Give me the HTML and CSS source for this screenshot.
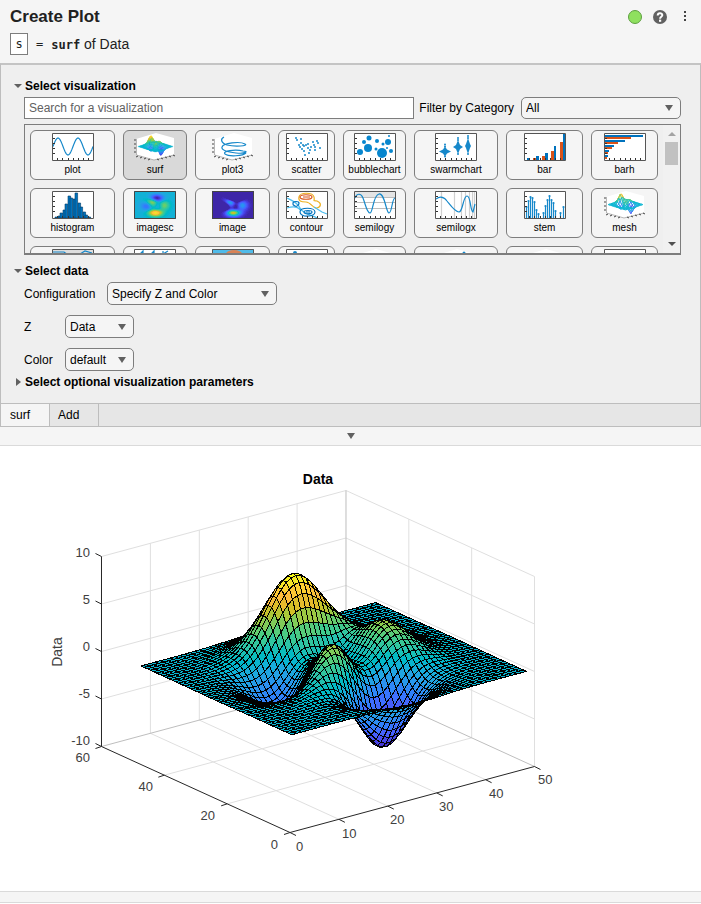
FILE: index.html
```html
<!DOCTYPE html>
<html lang="en">
<head>
<meta charset="utf-8">
<title>Create Plot</title>
<link rel="stylesheet" href="styles.css">
</head>
<body>
<main class="task">
  <header class="task-header">
    <div class="title-row">
      <h1>Create Plot</h1>
      <div class="tools">
        <span class="status" role="img" aria-label="Ready"></span>
        <button class="tool" type="button" aria-label="Help">
          <svg width="14" height="14" viewBox="0 0 14 14"><circle cx="7" cy="7" r="7" fill="#616161"/><path d="M4.7 5.5C4.7 2.4 9.4 2.5 9.3 5.3C9.2 6.8 7.1 6.8 7.1 8.7" fill="none" stroke="#fff" stroke-width="2"/><path d="M6 9.6h2.2v2.2H6z" fill="#fff"/></svg>
        </button>
        <button class="tool" type="button" aria-label="More options">
          <svg width="14" height="14" viewBox="0 0 14 14"><path d="M6 1h2v2H6zM6 5h2v2H6zM6 9h2v2H6z" fill="#444"/></svg>
        </button>
      </div>
    </div>
    <div class="summary-row">
      <input class="out-name" value="s" aria-label="Output variable">
      <code class="equals">=</code>
      <span><code class="fn">surf</code> of Data</span>
    </div>
  </header>

  <section class="panel">
    <details open>
      <summary>Select visualization</summary>
      <div class="section-body">
        <div class="filter-row">
          <input class="search" type="search" placeholder="Search for a visualization" aria-label="Search for a visualization">
          <label for="category">Filter by Category</label>
          <span class="select wide"><select id="category"><option>All</option></select></span>
        </div>
        <div class="gallery">
          <div class="cards" id="cards"></div>
          <div class="scroll" aria-hidden="true"><i class="up"></i><i class="thumb"></i><i class="down"></i></div>
        </div>
      </div>
    </details>
    <details open>
      <summary>Select data</summary>
      <div class="section-body fields">
        <div class="field config"><label for="config">Configuration</label><span class="select"><select id="config"><option>Specify Z and Color</option></select></span></div>
        <div class="field"><label for="zdata">Z</label><span class="select"><select id="zdata"><option>Data</option></select></span></div>
        <div class="field"><label for="color">Color</label><span class="select"><select id="color"><option>default</option></select></span></div>
      </div>
    </details>
    <details>
      <summary>Select optional visualization parameters</summary>
    </details>
  </section>

  <nav class="tabs">
    <button class="tab active" type="button">surf</button>
    <button class="tab" type="button">Add</button>
  </nav>
  <button class="collapse" type="button" aria-label="Collapse controls"><i></i></button>

  <figure class="output">
    <svg id="chart" viewBox="0 0 701 445" role="img" aria-label="Surface plot of Data"></svg>
  </figure>
  <footer class="task-footer"></footer>
</main>
<script src="script.js"></script>
</body>
</html>
```
FILE: styles.css
```css
*, *::before, *::after { box-sizing: border-box; }
body {
  margin: 0;
  background: #fff;
  color: #000;
  font: 12px/16px "Liberation Sans", Arial, sans-serif;
}
button, input, select { font: inherit; color: inherit; margin: 0; }
button { border: 0; background: none; padding: 0; }
i { display: block; }

.task-header {
  background: #f5f5f5;
  color: #212121;
  padding: 6px 9px 8px 10px;
}
.title-row, .tools, .summary-row { display: flex; align-items: center; }
.title-row { justify-content: space-between; height: 22px; }
h1 { margin: 0; font-size: 17px; line-height: 24px; }
.tools { gap: 11px; }
.status {
  width: 14px;
  height: 14px;
  border: 1px solid #5d9f40;
  border-radius: 50%;
  background: #8fe05f;
}
.tool, .tool svg { display: block; height: 14px; }
.summary-row { height: 22px; margin-top: 5px; font-size: 14px; line-height: 22px; }
.out-name {
  width: 18px;
  height: 22px;
  padding: 0;
  border: 1px solid #7d7d7d;
  background: #fff;
  text-align: center;
}
.out-name, code { font-family: "DejaVu Sans Mono", monospace; font-size: 12px; }
.equals { margin: 0 8px; }
.fn { font-weight: bold; }

.panel {
  border: 1px solid #bdbdbd;
  border-bottom: 0;
  border-top: 2px solid #c4c4c4;
  background: #efefef;
  padding: 13px 19px 13px 14px;
}
summary {
  display: flex;
  align-items: center;
  gap: 2px;
  margin-left: -1px;
  font-weight: bold;
  list-style: none;
}
summary::before {
  content: "";
  width: 5px;
  height: 8px;
  margin: 0 2px;
  border: 4px solid transparent;
  border-left: 5px solid #616161;
  border-right: 0;
}
details[open] > summary::before {
  width: 8px;
  height: 4px;
  margin: 0 1px 0 0;
  border: 4px solid transparent;
  border-top-color: #616161;
  border-bottom: 0;
}
.section-body { padding: 3px 0 0 9px; }
.filter-row { display: flex; align-items: center; }
.search {
  appearance: none;
  flex: 1;
  min-width: 0;
  height: 22px;
  padding: 0 4px;
  border: 1px solid #7d7d7d;
  border-radius: 0;
  background: #fff;
}
.search::placeholder { color: #616161; opacity: 1; }
.filter-row label { margin: 0 7px 0 5px; }
.select { display: grid; align-items: center; }
.select.wide { flex: 0 1 160px; }
.select select, .select::after { grid-area: 1 / 1; }
.select select {
  appearance: none;
  width: 100%;
  height: 23px;
  padding: 0 26px 0 4px;
  border: 1px solid #7d7d7d;
  border-radius: 5px;
  background: #f5f5f5;
}
.select.wide select { height: 22px; }
.select::after {
  content: "";
  justify-self: end;
  width: 8px;
  height: 6px;
  margin-right: 8px;
  border: 4px solid transparent;
  border-top: 6px solid #616161;
  border-bottom: 0;
  pointer-events: none;
}

.gallery {
  display: flex;
  height: 131px;
  margin: 5px 0 8px;
  border: 1px solid #7d7d7d;
  border-bottom-width: 2px;
  overflow: hidden;
}
.cards {
  flex: 1;
  display: grid;
  grid-template-columns: 85fr 64fr 75fr 57fr 63fr 84fr 77fr 67fr;
  grid-auto-rows: 50px;
  gap: 8px;
  padding: 5px;
}
.card {
  display: flex;
  flex-direction: column;
  align-items: center;
  min-width: 0;
  padding-top: 2px;
  border: 1px solid #7d7d7d;
  border-radius: 6px;
  background: #f5f5f5;
  font-size: 10px;
  line-height: 18px;
}
.card.selected { background: #d9d9d9; }
.card svg { display: block; width: 42px; height: 28px; flex: none; }
.scroll {
  width: 17px;
  display: flex;
  flex-direction: column;
  align-items: center;
  background: #f1f1f1;
  padding: 7px 0;
}
.up, .down { border: 4px solid transparent; }
.up { border-top: 0; border-bottom-color: #a3a3a3; }
.thumb { width: 13px; height: 23px; margin-top: 6px; background: #c1c1c1; }
.down { margin-top: auto; border-bottom: 0; border-top-color: #505050; }

.fields { display: flex; flex-direction: column; gap: 10px; align-items: flex-start; margin-bottom: 3px; }
.field { display: grid; grid-template-columns: 41px 69px; align-items: center; }
.field.config { grid-template-columns: 83px 170px; }

.tabs {
  display: flex;
  height: 24px;
  border: 1px solid #bdbdbd;
  background: #e6e6e6;
}
.tab { width: 49px; padding-left: 8px; border-right: 1px solid #bdbdbd; text-align: left; }
.tab.active { padding-left: 9px; background: #f5f5f5; }
.collapse {
  display: grid;
  place-items: center;
  width: 100%;
  height: 19px;
  border-bottom: 1px solid #dadada;
  background: #f5f5f5;
}
.collapse i { border: 4px solid transparent; border-top: 6px solid #616161; border-bottom: 0; }
.output { margin: 0; background: #fff; }
.output svg { display: block; width: 100%; max-width: 800px; }
.output text { font-size: 13px; fill: #404040; }
.output .end { text-anchor: end; }
.output .mid { text-anchor: middle; font-size: 14px; }
.output .head { font-weight: bold; fill: #000; }
.task-footer {
  height: 12px;
  border: 1px solid #dadada;
  border-width: 1px 0;
  background: #f5f5f5;
}
```
FILE: script.js
```js
// Parula colour map, 64 samples.
const PARULA = (
  '.2422,.1504,.6603 .2504,.1650,.7076 .2578,.1818,.7511 .2647,.1978,.7952 .2706,.2147,.8364 .2751,.2342,.8710 .2783,.2559,.8991 .2803,.2782,.9221 ' +
  '.2813,.3006,.9414 .2810,.3228,.9579 .2795,.3447,.9717 .2760,.3667,.9829 .2699,.3892,.9906 .2602,.4123,.9952 .2440,.4358,.9988 .2206,.4603,.9973 ' +
  '.1963,.4847,.9892 .1834,.5074,.9798 .1786,.5289,.9682 .1764,.5499,.9520 .1687,.5703,.9359 .1540,.5902,.9218 .1460,.6091,.9079 .1380,.6276,.8973 ' +
  '.1248,.6459,.8883 .1113,.6635,.8763 .0952,.6798,.8598 .0689,.6948,.8394 .0297,.7082,.8163 .0036,.7203,.7917 .0067,.7312,.7660 .0433,.7411,.7394 ' +
  '.0964,.7500,.7120 .1408,.7584,.6842 .1717,.7670,.6554 .1938,.7758,.6251 .2161,.7843,.5923 .2470,.7918,.5567 .2906,.7973,.5188 .3406,.8008,.4789 ' +
  '.3909,.8029,.4354 .4456,.8024,.3909 .5044,.7993,.3480 .5616,.7942,.3045 .6174,.7876,.2612 .6720,.7793,.2227 .7242,.7698,.1910 .7738,.7598,.1646 ' +
  '.8203,.7498,.1535 .8634,.7406,.1596 .9035,.7330,.1774 .9393,.7288,.2100 .9728,.7298,.2394 .9956,.7434,.2371 .9970,.7659,.2199 .9952,.7893,.2028 ' +
  '.9892,.8136,.1885 .9786,.8386,.1766 .9676,.8639,.1643 .9610,.8890,.1537 .9597,.9135,.1423 .9628,.9373,.1265 .9691,.9606,.1064 .9769,.9839,.0805'
).split(' ').map(c => c.split(',').map(v => Math.round(v * 255)));

const colorAt = t => `rgb(${PARULA[Math.max(0, Math.min(63, Math.floor(t * 64)))]})`;
const Z_MIN = -6.55, Z_MAX = 8.1;
const zColor = z => colorAt((z - Z_MIN) / (Z_MAX - Z_MIN));

const peaks = (x, y) =>
  3 * (1 - x) ** 2 * Math.exp(-x * x - (y + 1) ** 2) -
  10 * (x / 5 - x ** 3 - y ** 5) * Math.exp(-x * x - y * y) -
  Math.exp(-((x + 1) ** 2) - y * y) / 3;

// Builds the quads of an n-by-n peaks surface, far ones first.
function surface(n, project, paint) {
  const h = k => -3 + 6 * (k - 1) / (n - 1);
  const z = (i, j) => peaks(h(i), h(j));
  let out = '';
  for (let j = n - 1; j >= 1; j--) {
    for (let i = n - 1; i >= 1; i--) {
      const pts = [[i, j], [i + 1, j], [i + 1, j + 1], [i, j + 1]]
        .map(([a, b]) => project(a, b, z(a, b)).map(v => v.toFixed(2)).join()).join(' ');
      out += `<polygon points="${pts}" ${paint(zColor(z(i, j)))}/>`;
    }
  }
  return out;
}

// Main chart: data coordinates to drawing coordinates.
const P = (x, y, z) => [290 + 4.89 * x - 3.1417 * y, 291.5 - 1.32 * x - 1.4333 * y - 9.5 * z];
const seg = (a, b, stroke) => {
  const [x1, y1] = P(...a), [x2, y2] = P(...b);
  return `<line x1="${x1}" y1="${y1}" x2="${x2}" y2="${y2}" stroke="${stroke}"/>`;
};
(function drawChart() {
  const light = '#dfdfdf', mid = '#bebebe', dark = '#262626';
  let s = '';
  for (const x of [10, 20, 30, 40]) s += seg([x, 60, -10], [x, 60, 10], light) + seg([x, 0, -10], [x, 60, -10], light);
  for (const y of [20, 40]) s += seg([50, y, -10], [50, y, 10], light) + seg([0, y, -10], [50, y, -10], light);
  for (const z of [-5, 0, 5, 10]) s += seg([0, 60, z], [50, 60, z], light) + seg([50, 60, z], [50, 0, z], light);
  s += seg([50, 0, -10], [50, 0, 10], light);
  s += seg([50, 60, -10], [50, 60, 10], mid) + seg([0, 60, -10], [50, 60, -10], mid) + seg([50, 60, -10], [50, 0, -10], mid);
  s += seg([0, 60, -10], [0, 60, 10], dark) + seg([0, 60, -10], [0, 0, -10], dark) + seg([0, 0, -10], [50, 0, -10], dark);
  const tick = (p, dx, dy) => {
    const [x, y] = P(...p);
    return `<line x1="${x}" y1="${y}" x2="${x + dx}" y2="${y + dy}" stroke="${dark}"/>`;
  };
  for (const z of [-10, -5, 0, 5, 10]) s += tick([0, 60, z], -6, -3);
  for (const y of [0, 20, 40, 60]) s += tick([0, y, -10], -6, 2);
  for (const x of [0, 10, 20, 30, 40, 50]) s += tick([x, 0, -10], 6, 3);
  s += '<g stroke="#000" shape-rendering="crispEdges" stroke-linejoin="round">' + surface(49, P, c => `fill="${c}"`) + '</g>';
  const end = [['10', 90, 111], ['5', 90, 158], ['0', 90, 205], ['-5', 90, 252], ['-10', 90, 299], ['60', 90, 316], ['40', 153, 345], ['20', 215, 374], ['0', 278, 403]];
  const start = [['0', 296, 405], ['10', 342, 392], ['20', 390, 378], ['30', 439, 365], ['40', 489, 352], ['50', 538, 338]];
  for (const [t, x, y] of end) s += `<text class="end" x="${x}" y="${y}">${t}</text>`;
  for (const [t, x, y] of start) s += `<text x="${x}" y="${y}">${t}</text>`;
  s += '<text class="mid head" x="318" y="38">Data</text>';
  s += '<text class="mid" transform="translate(62 206) rotate(-90)">Data</text>';
  document.getElementById('chart').innerHTML = s;
})();

// Gallery thumbnails, each drawn in a 42 by 28 box.
const BLUE = '#0072bd', SKY = '#1688ca', ORANGE = '#d95319';
const box = '<path d="M0 0H42V28H0Z" fill="#fff"/>';
const frame = '<path d="M.5 .5H41.5V27.5H.5Z" fill="none" stroke="#555"/>' +
  '<path d="M1 5.5h2M1 10.5h2M1 15.5h2M1 20.5h2M5.5 27v-2M10.5 27v-2M16.5 27v-2M21.5 27v-2M26.5 27v-2M31.5 27v-2M36.5 27v-2" stroke="#333"/>';
const framed = s => box + s + frame;
const line = (d, c = SKY, w = 1.2) => `<path d="${d}" fill="none" stroke="${c}" stroke-width="${w}"/>`;
const dots = (list, r, c = SKY) => list.map(([x, y, q]) => `<circle cx="${x}" cy="${y}" r="${q || r}" fill="${c}"/>`).join('');
const rects = (list, c) => list.map(([x, y, w, h]) => `<path d="M${x} ${y}h${w}v${h}h${-w}z" fill="${c}"/>`).join('');
const curve = f => {
  let d = '';
  for (let x = 1; x <= 41; x++) d += (d ? 'L' : 'M') + x + ' ' + f(x).toFixed(2);
  return d;
};
const room = '<path d="M2 6L22 0L40 5V22L20 27L2 22Z" fill="#fff"/>' +
  '<path d="M2.5 6V22L20 27L40 22" fill="none" stroke="#999" stroke-width=".7"/>' +
  '<path d="M0 7h2M0 11h2M0 15h2M0 19h2M4 23l-2 1M8 24l-2 1M12 25l-2 1M16 26l-2 1M23 26l2 1M27 25l2 1M31 24l2 1M35 23l2 1M39 22l2 1" stroke="#444"/>';
const mini = (x, y, z) => [21.5 + .84 * x - .84 * y, 19.5 - .26 * x - .26 * y - z * 1.15];
const heat = f => {
  let s = '';
  for (let y = 0; y < 28; y++) for (let x = 0; x < 42; x++) {
    s += `<path d="M${x} ${y}h1v1h-1z" fill="${f(peaks(-3 + x / 7, -3 + y * 6 / 28))}"/>`;
  }
  return `<g shape-rendering="crispEdges">${s}</g><path d="M.5 .5H41.5V27.5H.5Z" fill="none" stroke="#444"/>`;
};
const plume = (cx, cy, w, h) => `<path d="M${cx} ${cy - h}L${cx + 2} ${cy - 2}L${cx + w} ${cy}L${cx + 2} ${cy + 2}L${cx} ${cy + h}L${cx - 2} ${cy + 2}L${cx - w} ${cy}L${cx - 2} ${cy - 2}Z" fill="${SKY}"/>` + dots([[cx, cy - h], [cx, cy + h], [cx, cy - h - 2]], 1);
const stemTops = [[2.5, 16], [4.5, 10], [6.5, 6], [8.5, 7], [10.5, 11], [12.5, 19], [14.5, 23], [19.5, 22], [21.5, 15], [23.5, 9], [25.5, 5], [27.5, 9], [29.5, 12], [31.5, 20], [36.5, 22], [39.5, 16]];

const art = {
  plot: framed(line(curve(x => 13.5 - 8.5 * Math.sin((x - 1) * .314)))),
  surf: room + surface(22, mini, c => `fill="${c}" stroke="${c}" stroke-width=".3"`),
  plot3: room + line('M12 4C8 6 9 10 15 12C23 14 37 13 33 11C28 8 11 10 10 14C9 17 15 19 24 20C34 21 37 18 31 18C23 16 10 18 13 21C17 24 31 23 34 20'),
  scatter: framed(dots([[10, 5], [11, 7], [15, 6], [15, 10], [13, 12], [14, 14], [17, 12], [18, 13], [20, 12], [16, 16], [18, 18], [22, 11], [22, 15], [19, 22], [25, 14], [24, 17], [27, 9], [28, 12], [29, 14], [31, 8], [32, 10], [34, 15], [23, 20], [29, 17]], 1)),
  bubblechart: framed(dots([[6, 19, 3], [10, 9, 2], [15, 5, 2.5], [14, 15, 4], [22, 16, 1.5], [23, 8, 2], [29, 11, 1.5], [28, 20, 5], [34, 9, 3], [35, 3, 1], [37, 18, 2], [33, 15, 1]], 2, '#0786ce')),
  swarmchart: framed(plume(10, 18.5, 6, 5) + plume(23, 14, 5, 7) + plume(33, 13, 3, 8)),
  bar: framed(rects([[4, 25, 2, 2], [9, 25, 3, 2], [18, 23, 3, 4], [27, 18, 3, 9], [36, 9, 3, 18]], ORANGE) + rects([[3, 25, 3, 2], [12, 23, 3, 4], [21, 20, 3, 7], [30, 13, 2, 14], [39, 1, 2, 26]], BLUE)),
  barh: framed(rects([[1, 4, 26, 2], [1, 9, 13, 2], [1, 14, 7, 2], [1, 19, 3, 2], [1, 24, 2, 2]], ORANGE) + rects([[1, 2, 38, 2], [1, 7, 20, 2], [1, 12, 9, 2], [1, 17, 4, 2], [1, 22, 3, 2]], BLUE)),
  histogram: framed([[3, 26], [6, 25], [8, 22], [11, 19], [13, 13], [16, 5], [18, 7], [21, 8], [23, 2], [26, 12], [28, 16], [31, 21], [33, 24], [36, 26]].map(([x, y]) => `<path d="M${x} ${y}h2.6V27h-2.6z" fill="${BLUE}" stroke="#003c68" stroke-width=".6"/>`).join('')),
  imagesc: heat(v => colorAt((v + 6.8) / 16)),
  image: heat(v => colorAt(Math.max(0, v) / 10.5)),
  contour: framed(line('M1 7C7 10 12 12 14 17S25 24 31 27M1 17C8 15 12 16 14 19', '#4dbeee') +
    line('M13 6C13 1 27 1 28 6S26 9 31 10C36 12 35 16 31 17S25 11 20 11S12 10 13 6Z', '#edb120') +
    line('M14 6C14 3 26 3 26 6S14 9 14 6ZM17 6H24', ORANGE) +
    line('M7 12C7 10 13 10 13 12S11 16 9 15S7 14 7 12M14 21C14 16 29 16 29 21S14 27 14 21M18 21C18 19 26 19 26 21S18 24 18 21M20 21h4', BLUE) +
    line('M28 16L36 21L41 23', '#4dbeee')),
  semilogy: framed(rects([[1, 1, 40, 5]], '#e4e4e4') + line('M1 6.5H41M1 11.5H41M1 17.5H41', '#bdbdbd') + line('M1 7C3 2 7 2 9 7C12 15 13 22 16 22S19 4 25 3S32 22 35 22S38 7 41 7')),
  semilogx: framed(line('M6.5 1V27M19.5 1V27M26.5 1V27M30.5 1V27M34.5 1V27M37.5 1V27M39.5 1V27', '#d0d0d0') + line('M1 8C5 5 9 6 12 10C16 15 20 21 24 21S28 5 32 5S35 20 38 21L40 13')),
  stem: framed(stemTops.map(([x, y]) => line(`M${x} 27V${y}`) + dots([[x, y]], 1.1)).join('')),
  mesh: room + surface(14, (x, y, z) => mini(x * 1.6 - .6, y * 1.6 - .6, z), c => `fill="#fff" fill-opacity=".6" stroke="${c}" stroke-width=".8"`),
};
const partial = [
  ['loglog', framed(rects([[1, 1, 40, 4]], '#ddd') + line('M1 3H12L16 6M28 5L33 2L40 4'))],
  ['stairs', framed(line('M6 5L9 2V5M17 5L20 2V5M29 2V5L34 2'))],
  ['geobubble', '<path d="M0 0H42V28H0Z" fill="#4fbbe9"/><ellipse cx="22" cy="5" rx="8" ry="4" fill="#d98255"/>' + frame],
  ['scatterhistogram', framed(dots([[9, 4]], 2))],
  ['scatter3', room],
  ['bubblechart3', room + dots([[29, 4]], 1.5)],
  ['bar3', room],
  ['pareto', box + frame],
];
const icon = s => `<svg viewBox="0 0 42 28" aria-hidden="true">${s}</svg>`;
document.getElementById('cards').innerHTML =
  Object.entries(art).map(([name, s]) => `<button type="button" class="card${name === 'surf' ? ' selected' : ''}">${icon(s)}<span>${name}</span></button>`).join('') +
  partial.map(([name, s]) => `<button type="button" class="card" aria-label="${name}">${icon(s)}</button>`).join('');
```
